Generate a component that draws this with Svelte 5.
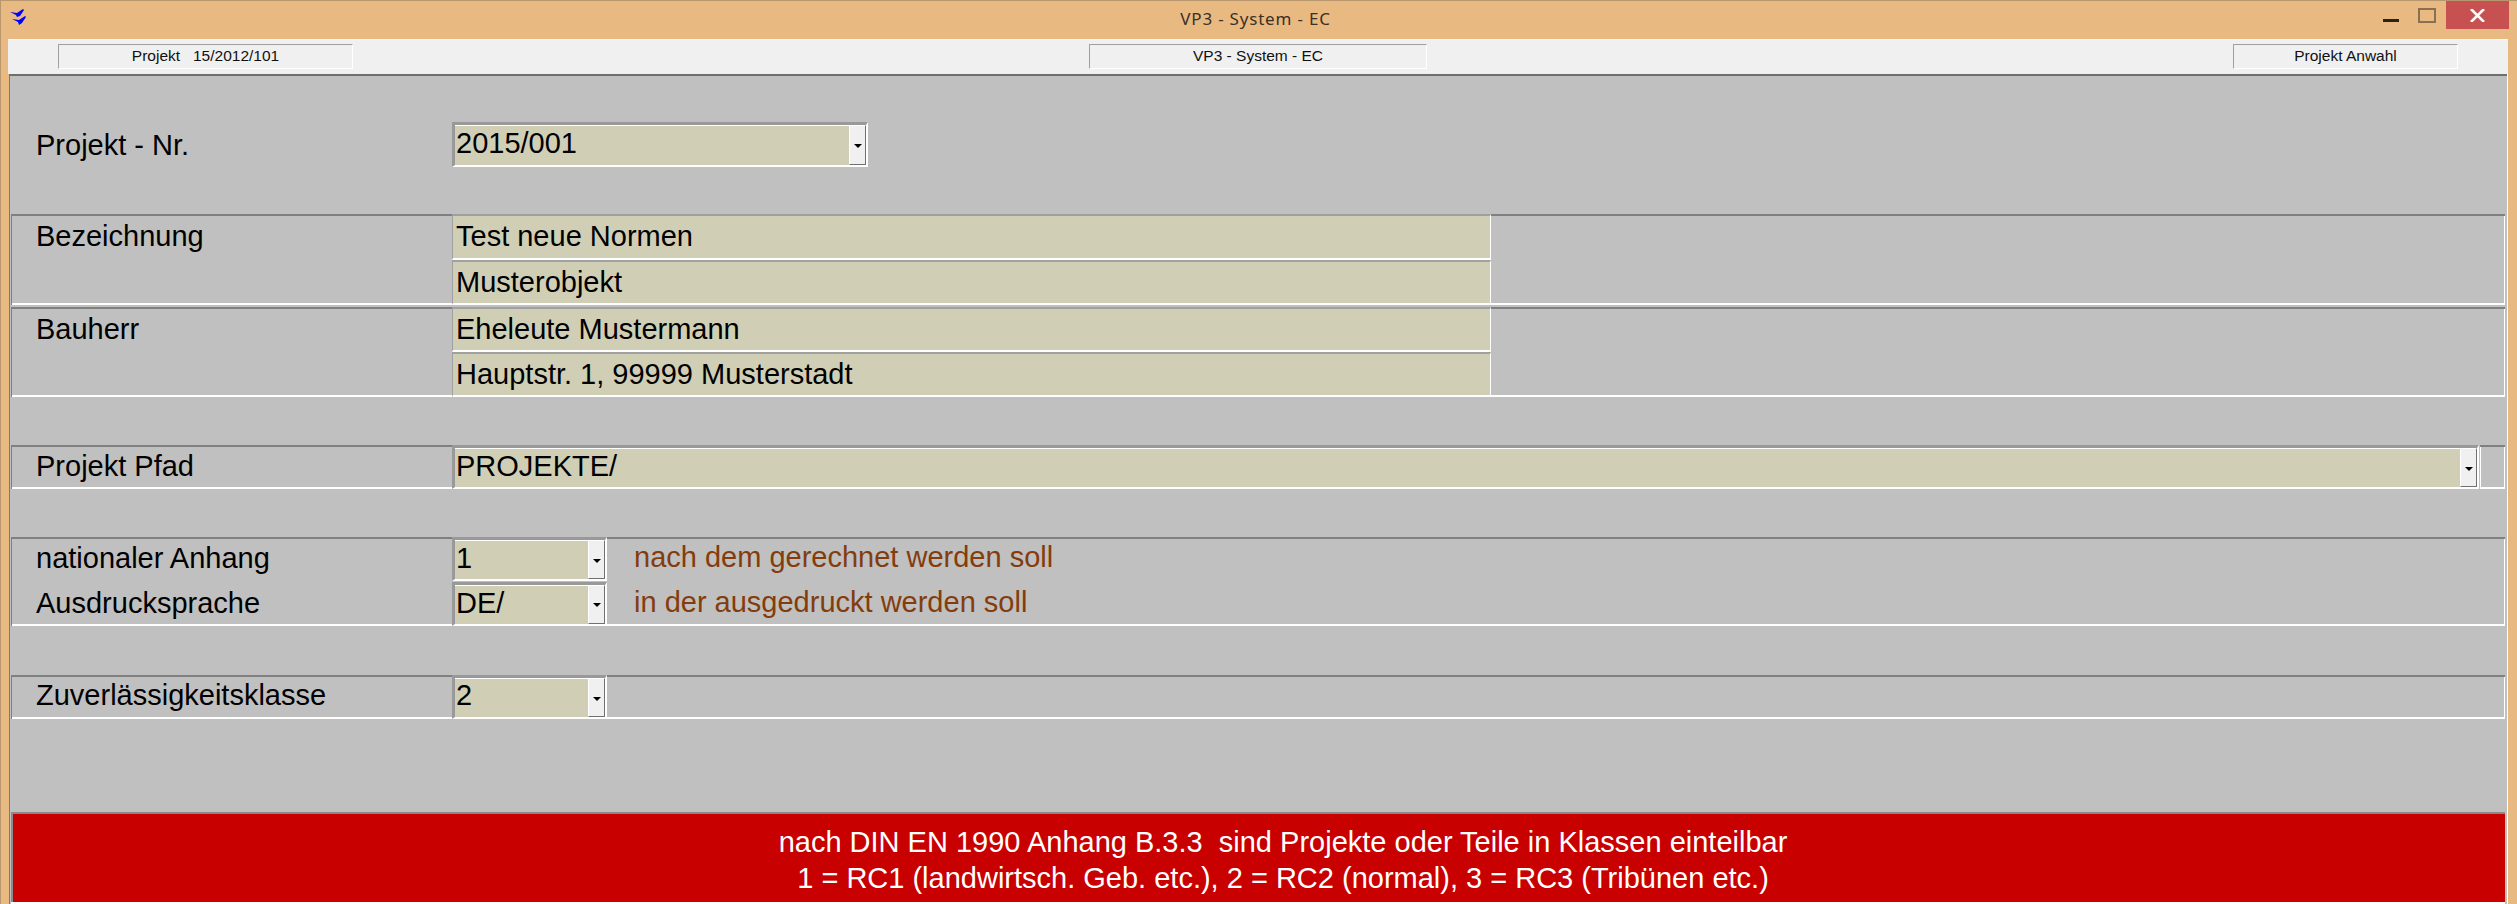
<script>
  const tools = [
    { text: 'Projekt   15/2012/101', cls: 'a' },
    { text: 'VP3 - System - EC', cls: 'b' },
    { text: 'Projekt Anwahl', cls: 'c' }
  ];
</script>

<div class="window">
  <header class="titlebar">
    <svg class="logo" width="20" height="18" viewBox="0 0 20 18">
      <path fill="#0000ff" d="M0 3 L7 4 L13 0 L14 1 L10 7 L7 8 L6 6 Z" />
      <path fill="#0000ff" d="M2 10 L9 11 L15 7 L16 8 L12 14 L9 16 L8 13 Z" />
    </svg>
    <div class="title">VP3 - System - EC</div>
    <div class="controls">
      <span class="min"></span>
      <span class="max"></span>
      <span class="close">
        <svg width="15" height="13" viewBox="0 0 15 13">
          <path d="M1 0 L14 13 M14 0 L1 13" stroke="#fff" stroke-width="2.6" fill="none" />
        </svg>
      </span>
    </div>
  </header>

  <div class="body">
    <div class="toolbar">
      {#each tools as t}
        <div class="tool {t.cls}">{t.text}</div>
      {/each}
    </div>

    <main class="main">
      <div class="toprow">
        <div class="label big">Projekt - Nr.</div>
        <div class="combo w-nr">
          <div class="value">2015/001</div>
          <div class="btn"><i></i></div>
        </div>
      </div>

      <section class="frame f1">
        <div class="label tall">Bezeichnung</div>
        <div class="fields">
          <div class="field h46">Test neue Normen</div>
          <div class="field h45">Musterobjekt</div>
        </div>
      </section>

      <section class="frame f2">
        <div class="label tall">Bauherr</div>
        <div class="fields">
          <div class="field h45">Eheleute Mustermann</div>
          <div class="field h45">Hauptstr. 1, 99999 Musterstadt</div>
        </div>
      </section>

      <div class="pathrow">
        <section class="frame f3">
          <div class="label">Projekt Pfad</div>
          <div class="combo w-path">
            <div class="value">PROJEKTE/</div>
            <div class="btn"><i></i></div>
          </div>
        </section>
        <section class="frame stub"></section>
      </div>

      <section class="frame f4">
        <div class="label">nationaler Anhang</div>
        <div class="rowline">
          <div class="combo w-small">
            <div class="value">1</div>
            <div class="btn"><i></i></div>
          </div>
          <div class="note">nach dem gerechnet werden soll</div>
        </div>
        <div class="label">Ausdrucksprache</div>
        <div class="rowline">
          <div class="combo w-small">
            <div class="value">DE/</div>
            <div class="btn"><i></i></div>
          </div>
          <div class="note">in der ausgedruckt werden soll</div>
        </div>
      </section>

      <section class="frame f5">
        <div class="label">Zuverlässigkeitsklasse</div>
        <div class="rowline">
          <div class="combo w-small">
            <div class="value">2</div>
            <div class="btn"><i></i></div>
          </div>
        </div>
      </section>

      <section class="banner">
        <div class="line">nach DIN EN 1990 Anhang B.3.3  sind Projekte oder Teile in Klassen einteilbar</div>
        <div class="line">1 = RC1 (landwirtsch. Geb. etc.), 2 = RC2 (normal), 3 = RC3 (Tribünen etc.)</div>
      </section>
    </main>
  </div>
</div>

<style>
  :global(body) {
    margin: 0;
    background: #e9b982;
  }

  .window {
    width: 2517px;
    height: 904px;
    box-sizing: border-box;
    background: #e9b982;
    box-shadow: inset 1px 1px 0 #b8966e;
    display: flex;
    flex-direction: column;
    overflow: hidden;
    font-family: "Liberation Sans", Arial, sans-serif;
    color: #000;
  }

  .titlebar {
    height: 39px;
    flex: none;
    display: grid;
    grid-template-columns: 1fr auto 1fr;
    align-items: center;
    position: relative;
  }

  .logo {
    margin: 0 0 4px 10px;
  }

  .title {
    font-family: "Noto Sans", "Open Sans", sans-serif;
    font-size: 17px;
    letter-spacing: 0.8px;
    color: #3a3026;
    margin: 0 6px 2px 0;
  }

  .controls {
    justify-self: end;
    align-self: start;
    display: flex;
    align-items: flex-start;
    margin: 1px 8px 0 0;
  }

  .min {
    width: 16px;
    height: 3px;
    background: #2b2118;
    margin: 18px 19px 0 0;
  }

  .max {
    box-sizing: border-box;
    width: 18px;
    height: 15px;
    border: 2px solid #8a7050;
    margin: 7px 10px 0 0;
  }

  .close {
    width: 63px;
    height: 28px;
    background: #c75050;
    display: flex;
    align-items: center;
    justify-content: center;
  }

  .body {
    flex: 1;
    margin: 0 9px 0 8px;
    display: flex;
    flex-direction: column;
    min-height: 0;
  }

  .toolbar {
    height: 35px;
    flex: none;
    background: #f0f0f0;
    box-shadow: inset 0 1px 0 #f8f8f8;
    display: flex;
    padding-top: 5px;
    box-sizing: border-box;
  }

  .tool {
    box-sizing: border-box;
    height: 25px;
    border-top: 1px solid #a0a0a0;
    border-left: 1px solid #a0a0a0;
    border-bottom: 1px solid #fff;
    border-right: 1px solid #fff;
    font-size: 15.5px;
    line-height: 21px;
    text-align: center;
    white-space: pre;
    color: #111;
  }

  .tool.a { margin-left: 50px; width: 295px; }
  .tool.b { margin-left: 736px; width: 338px; }
  .tool.c { margin-left: 806px; width: 225px; }

  .main {
    flex: 1;
    min-height: 0;
    margin: 0 1px 0 1px;
    border-top: 2px solid #6f6f6f;
    border-left: 1px solid #7a7a7a;
    box-shadow: 1px 0 0 #fff;
    background: #c0c0c0;
    padding: 46px 2px 0 1px;
    display: flex;
    flex-direction: column;
  }

  .label {
    font-size: 29px;
    padding-left: 25px;
    height: 44px;
    line-height: 42px;
    white-space: nowrap;
  }

  .label.tall,
  .label.big {
    line-height: 44px;
  }

  .toprow {
    display: grid;
    grid-template-columns: 441px 1fr;
    align-items: center;
    height: 45px;
  }

  .frame {
    display: grid;
    grid-template-columns: 441px 1fr;
    box-shadow:
      inset 0 2px 0 #808080,
      inset 1px 0 0 #808080,
      inset 0 -2px 0 #fff,
      inset -1px 0 0 #fff;
  }

  .f1 { margin-top: 47px; height: 91px; }
  .f2 { margin-top: 2px; height: 90px; }
  .pathrow { margin-top: 48px; height: 44px; display: flex; }
  .f3 { flex: 1; height: 44px; grid-template-columns: 441px auto; justify-content: start; }
  .stub {
    width: 25px;
    height: 44px;
    margin-left: 1px;
    flex: none;
    box-shadow:
      inset 0 2px 0 #808080,
      inset 1px 0 0 #fff,
      inset 0 -2px 0 #fff,
      inset -1px 0 0 #fff;
  }
  .f4 { margin-top: 48px; height: 89px; grid-auto-rows: 44.5px; }
  .f5 { margin-top: 49px; height: 44px; }
  .f5 .label { line-height: 40px; }
  .f5 .value { line-height: 34px; }

  .fields {
    width: 1039px;
    display: flex;
    flex-direction: column;
  }

  .field {
    box-sizing: border-box;
    background: #d0cfb6;
    border-top: 2px solid #a0a0a0;
    border-left: 1px solid #a0a0a0;
    border-right: 1px solid #fff;
    border-bottom: 2px solid #fff;
    font-size: 29px;
    padding-left: 3px;
    line-height: 40px;
    white-space: nowrap;
  }

  .h46 { height: 46px; }
  .h45 { height: 45px; }

  .combo {
    box-sizing: border-box;
    height: 44px;
    display: flex;
    background: #d0cfb6;
    border-top: 3px solid #999;
    border-left: 3px solid #999;
    border-bottom: 2px solid #fff;
    border-right: 2px solid #fff;
    box-shadow: inset 0 1px 0 #fff;
  }

  .w-nr { width: 416px; height: 45px; }
  .w-path { width: 2027px; }
  .w-small { width: 155px; flex: none; }

  .value {
    flex: 1;
    font-size: 29px;
    line-height: 36px;
    padding-left: 1px;
    overflow: hidden;
    white-space: nowrap;
  }

  .btn {
    box-sizing: border-box;
    width: 17px;
    flex: none;
    background: #f0f0f0;
    border-top: 1px solid #fff;
    border-left: 1px solid #fff;
    border-right: 1px solid #707070;
    border-bottom: 1px solid #707070;
    display: flex;
    align-items: center;
    justify-content: center;
  }

  .btn i {
    width: 0;
    height: 0;
    border-left: 4px solid transparent;
    border-right: 4px solid transparent;
    border-top: 4px solid #000;
    margin-top: 2px;
  }

  .rowline {
    display: flex;
    align-items: center;
    height: 44px;
  }

  .note {
    font-size: 29px;
    color: #843c0c;
    margin: 0 0 3px 27px;
    white-space: nowrap;
  }

  .banner {
    margin-top: 93px;
    height: 90px;
    box-sizing: border-box;
    background: #c80000;
    border-top: 2px solid #8a8a8a;
    border-left: 2px solid #8a8a8a;
    color: #fff;
    font-size: 29px;
    line-height: 36px;
    padding: 10px 0 0 48px;
    text-align: center;
    box-shadow: 0 2px 0 #fff;
  }

  .line {
    white-space: pre;
  }
</style>
